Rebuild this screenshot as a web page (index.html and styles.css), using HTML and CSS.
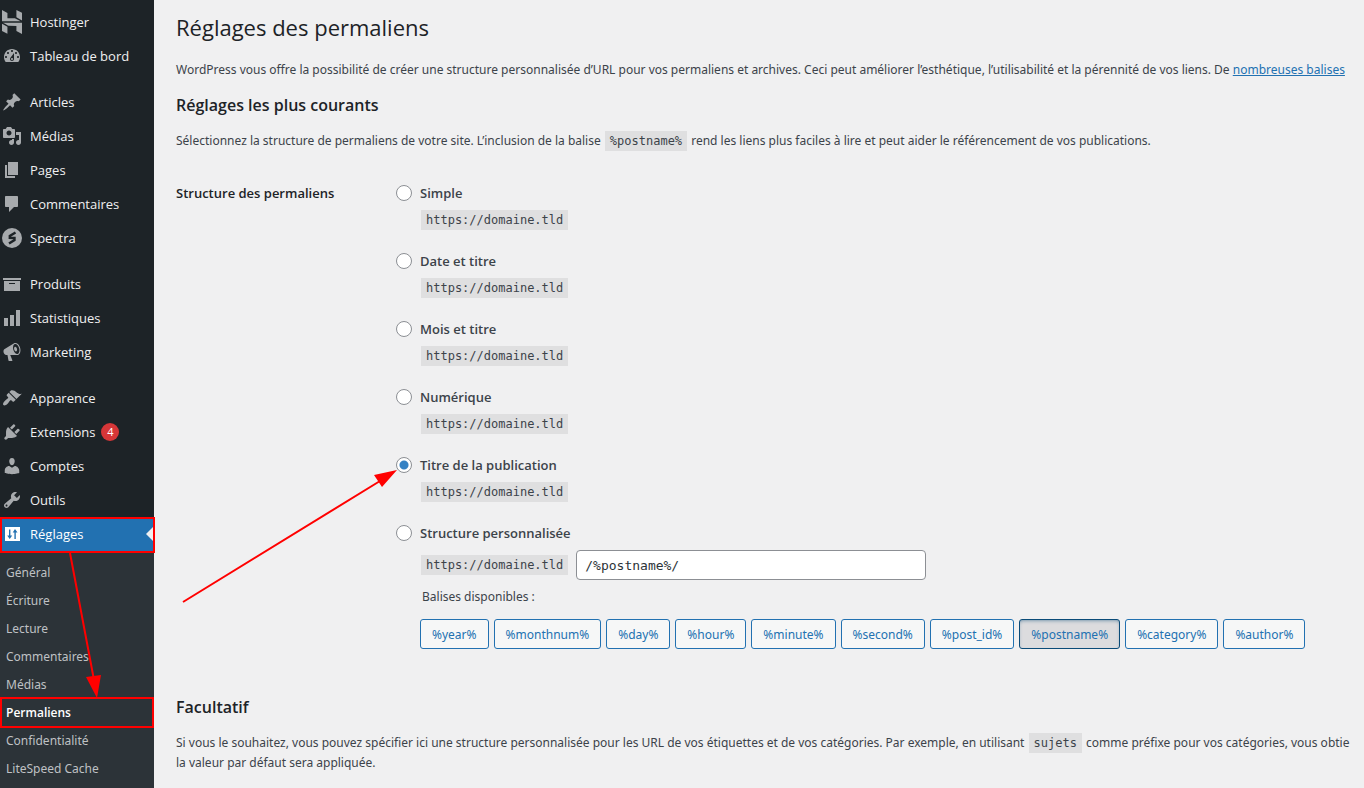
FILE: index.html
```html
<!DOCTYPE html>
<html lang="fr">
<head>
  <meta charset="UTF-8">
  <title>Réglages des permaliens</title>
  <link rel="stylesheet" href="styles.css">
</head>
<body>
  <div class="admin">
    <nav class="sidebar">
      <ul class="menu">
        <li><a href="#"><svg class="icon icon-tall" viewBox="2 0 20 24"><path d="M16.415 0v7.160l5.785 3.384V2.949L16.415 0zM1.800 0v11.237h18.815L14.890 8.156l-7.457-.003V3.025L1.800 0zM16.415 20.894v-5.019l-7.514-.005c.007.033-5.820-3.197-5.820-3.197l19.119.091V24l-5.785-3.106zM1.800 13.551v7.343l5.633 2.949v-6.988l-5.633-3.304z"/></svg>Hostinger</a></li>
        <li><a href="#"><svg class="icon" viewBox="0 0 20 20"><path fill-rule="evenodd" d="M3.760 16h12.480c1.100-1.370 1.760-3.110 1.760-5 0-4.420-3.580-8-8-8s-8 3.580-8 8c0 1.890.66 3.630 1.760 5zM10 4c.55 0 1 .45 1 1s-.45 1-1 1-1-.45-1-1 .45-1 1-1zM6 6c.55 0 1 .45 1 1s-.45 1-1 1-1-.45-1-1 .45-1 1-1zm8 0c.55 0 1 .45 1 1s-.45 1-1 1-1-.45-1-1 .45-1 1-1zm-5.370 5.550L12 7v6c0 1.100-.9 2-2 2s-2-.9-2-2c0-.57.24-1.080.63-1.450zM4 10c.55 0 1 .45 1 1s-.45 1-1 1-1-.45-1-1 .45-1 1-1zm12 0c.55 0 1 .45 1 1s-.45 1-1 1-1-.45-1-1 .45-1 1-1zm-5 3c0-.55-.45-1-1-1s-1 .45-1 1 .45 1 1 1 1-.45 1-1z"/></svg>Tableau de bord</a></li>
      </ul>
      <ul class="menu">
        <li><a href="#"><svg class="icon" viewBox="0 0 20 20"><path d="M10.440 3.020l1.820-1.820 6.360 6.350-1.830 1.820c-1.050-.68-2.480-.57-3.410.36l-.75.75c-.92.93-1.040 2.350-.35 3.410l-1.830 1.820-2.410-2.410-2.800 2.790c-.42.42-3.380 2.710-3.800 2.290s1.860-3.390 2.280-3.810l2.790-2.790L4.100 9.360l1.830-1.820c1.050.69 2.480.57 3.400-.36l.75-.75c.93-.92 1.050-2.350.36-3.410z"/></svg>Articles</a></li>
        <li><a href="#"><svg class="icon" viewBox="0 0 20 20"><path fill-rule="evenodd" d="M13 11V4c0-.55-.45-1-1-1h-1.670L9 1H5L3.670 3H2c-.55 0-1 .45-1 1v7c0 .55.45 1 1 1h10c.55 0 1-.45 1-1zM7 4.500c1.380 0 2.500 1.120 2.500 2.500S8.380 9.500 7 9.500 4.500 8.380 4.500 7 5.620 4.500 7 4.500zM14 6h5v10.500c0 1.380-1.120 2.500-2.500 2.500S14 17.880 14 16.500s1.120-2.500 2.500-2.500c.17 0 .34.02.5.05V9h-3V6zm-4 8.050V13h2v3.500c0 1.380-1.120 2.500-2.500 2.500S7 17.880 7 16.500 8.120 14 9.500 14c.17 0 .34.02.5.05z"/></svg>Médias</a></li>
        <li><a href="#"><svg class="icon" viewBox="0 0 20 20"><path d="M6 15V2h10v13H6zm-1 1h8v2H3V5h2v11z"/></svg>Pages</a></li>
        <li><a href="#"><svg class="icon" viewBox="0 0 20 20"><path d="M4 2h11c.55 0 1 .45 1 1v9c0 .55-.45 1-1 1h-3l-5 5v-5H4c-.55 0-1-.45-1-1V3c0-.55.45-1 1-1z"/></svg>Commentaires</a></li>
        <li><a href="#"><svg class="icon" viewBox="0 0 20 20"><circle cx="10" cy="10" r="10"/><path class="icon-line" d="M13.500 4.500L7.800 8V9.800L12.500 10V12L7 15.500"/></svg>Spectra</a></li>
      </ul>
      <ul class="menu">
        <li><a href="#"><svg class="icon" viewBox="0 0 20 20"><path fill-rule="evenodd" d="M19 4v2H1V4h18zM2 7h16v10H2V7zm11 3V9H7v1h6z"/></svg>Produits</a></li>
        <li><a href="#"><svg class="icon" viewBox="0 0 20 20"><path d="M18 18V2h-4v16h4zm-6 0V7H8v11h4zm-6 0v-8H2v8h4z"/></svg>Statistiques</a></li>
        <li><a href="#"><svg class="icon" viewBox="0 0 20 20"><path fill-rule="evenodd" d="M18.150 5.940c.46 1.620.38 3.220-.02 4.480-.42 1.280-1.260 2.180-2.300 2.480-.16.06-.26.06-.4.06-.06.02-.12.02-.18.02-.06.02-.14.02-.22.02h-6.800l2.220 5.500c.02.14-.06.26-.14.34-.08.1-.24.16-.34.16H6.950c-.1 0-.26-.06-.34-.16-.08-.08-.16-.2-.14-.34l-1-5.500H4.250l-.02-.02c-.5.06-1.080-.18-1.540-.62s-.88-1.080-1.060-1.880c-.24-.8-.2-1.560-.02-2.200.18-.62.58-1.080 1.060-1.300l.02-.02 9-5.400c.1-.06.18-.1.24-.16.06-.04.14-.08.24-.12.16-.08.28-.12.5-.18 1.040-.3 2.240.1 3.220.98s1.840 2.240 2.260 3.860zm-2.580 5.980h-.02c.4-.1.74-.34 1.040-.7.58-.7.86-1.760.86-3.040 0-.64-.1-1.300-.28-1.980-.34-1.360-1.020-2.500-1.780-3.240s-1.680-1.100-2.460-.88c-.82.22-1.400.96-1.700 2-.32 1.040-.28 2.360.06 3.720.38 1.360 1 2.500 1.800 3.240.78.74 1.620 1.100 2.480.88zm-2.540-7.080c.22-.04.42-.02.62.04.38.16.76.48 1.020 1s.42 1.200.42 1.780c0 .3-.04.56-.12.8-.18.48-.44.84-.86.94-.34.1-.8-.06-1.140-.4s-.64-.86-.78-1.500c-.18-.62-.12-1.240.02-1.720s.48-.84.82-.94z"/></svg>Marketing</a></li>
      </ul>
      <ul class="menu">
        <li><a href="#"><svg class="icon" viewBox="0 0 20 20"><path d="M14.480 11.060L7.410 3.990l1.500-1.500c.5-.56 2.300-.47 3.510.32 1.210.8 1.430 1.280 2.910 2.100 1.180.64 2.450 1.260 4.450.85zm-.71.71L6.700 4.700 4.930 6.470c-.39.39-.39 1.020 0 1.410l1.060 1.060c.39.39.39 1.030 0 1.420-.6.6-1.430 1.110-2.210 1.690-.35.26-.7.53-1.010.84C1.430 14.230.4 16.080 1.400 17.070c.99 1 2.840-.03 4.180-1.360.31-.31.58-.66.85-1.020.57-.78 1.080-1.610 1.690-2.210.39-.39 1.020-.39 1.410 0l1.060 1.060c.39.39 1.020.39 1.410 0z"/></svg>Apparence</a></li>
        <li><a href="#"><svg class="icon" viewBox="0 0 20 20"><path d="M13.110 4.360L9.870 7.600 8 5.730l3.240-3.240c.35-.34 1.050-.2 1.560.32.52.51.66 1.210.31 1.550zm-8 1.770l.91-1.120 9.010 9.010-1.190.84c-.71.71-2.630 1.160-3.820 1.160H6.140L4.900 17.260c-.59.59-1.540.59-2.120 0-.59-.58-.59-1.530 0-2.120l1.240-1.240v-3.880c0-1.130.4-3.190 1.090-3.890zm7.260 3.970l3.240-3.240c.34-.35 1.040-.21 1.550.31.52.51.66 1.210.31 1.550l-3.240 3.250z"/></svg>Extensions <span class="badge">4</span></a></li>
        <li><a href="#"><svg class="icon" viewBox="0 0 20 20"><path d="M10 9.250c-2.270 0-2.730-3.440-2.730-3.440C7 4.020 7.820 2 9.970 2c2.160 0 2.980 2.020 2.710 3.810 0 0-.41 3.440-2.680 3.440zm0 2.570L12.720 10c2.390 0 4.520 2.330 4.520 4.530v2.490s-3.650 1.130-7.240 1.130c-3.650 0-7.240-1.130-7.240-1.130v-2.490c0-2.250 1.940-4.480 4.470-4.480z"/></svg>Comptes</a></li>
        <li><a href="#"><svg class="icon" viewBox="0 0 20 20"><path fill-rule="evenodd" d="M16.680 9.770c-1.340 1.340-3.300 1.670-4.950.99l-5.410 6.520c-.99.99-2.590.99-3.580 0s-.99-2.590 0-3.570l6.520-5.420c-.68-1.650-.35-3.610.99-4.950 1.280-1.280 3.120-1.620 4.720-1.060l-2.890 2.890 2.820 2.820 2.860-2.870c.53 1.580.18 3.390-1.080 4.650zM3.810 16.210c.4.39 1.040.39 1.430 0 .4-.4.4-1.040 0-1.430-.39-.4-1.030-.4-1.430 0-.39.39-.39 1.030 0 1.430z"/></svg>Outils</a></li>
        <li><a href="#" class="current"><svg class="icon" viewBox="0 0 20 20"><path fill-rule="evenodd" d="M3 3h15v14H3zM7 5.500v6H5.200L7.700 15l2.500-3.500H8.400v-6zM13 5L10.700 8.500h1.700V15h1.400V8.500h1.700z"/></svg>Réglages</a></li>
      </ul>
      <ul class="submenu">
        <li><a href="#">Général</a></li>
        <li><a href="#">Écriture</a></li>
        <li><a href="#">Lecture</a></li>
        <li><a href="#">Commentaires</a></li>
        <li><a href="#">Médias</a></li>
        <li><a href="#" class="active">Permaliens</a></li>
        <li><a href="#">Confidentialité</a></li>
        <li><a href="#">LiteSpeed Cache</a></li>
      </ul>
    </nav>

    <main class="content">
      <h1>Réglages des permaliens</h1>
      <p>WordPress vous offre la possibilité de créer une structure personnalisée d’URL pour vos permaliens et archives. Ceci peut améliorer l’esthétique, l’utilisabilité et la pérennité de vos liens. De <a href="#">nombreuses balises</a></p>

      <h2>Réglages les plus courants</h2>
      <p>Sélectionnez la structure de permaliens de votre site. L’inclusion de la balise <code>%postname%</code> rend les liens plus faciles à lire et peut aider le référencement de vos publications.</p>

      <form class="structure">
        <div class="structure-title">Structure des permaliens</div>
        <div class="options">
          <div class="option">
            <input type="radio" name="structure" id="simple">
            <label for="simple">Simple</label>
            <div class="example"><code>https://domaine.tld</code></div>
          </div>
          <div class="option">
            <input type="radio" name="structure" id="date">
            <label for="date">Date et titre</label>
            <div class="example"><code>https://domaine.tld</code></div>
          </div>
          <div class="option">
            <input type="radio" name="structure" id="mois">
            <label for="mois">Mois et titre</label>
            <div class="example"><code>https://domaine.tld</code></div>
          </div>
          <div class="option">
            <input type="radio" name="structure" id="numerique">
            <label for="numerique">Numérique</label>
            <div class="example"><code>https://domaine.tld</code></div>
          </div>
          <div class="option">
            <input type="radio" name="structure" id="titre" checked>
            <label for="titre">Titre de la publication</label>
            <div class="example"><code>https://domaine.tld</code></div>
          </div>
          <div class="option">
            <input type="radio" name="structure" id="perso">
            <label for="perso">Structure personnalisée</label>
            <div class="example custom">
              <code>https://domaine.tld</code>
              <input type="text" class="text-input" aria-label="Structure personnalisée" value="/%postname%/">
            </div>
            <div class="example tags-title">Balises disponibles :</div>
            <div class="example tags">
              <button type="button">%year%</button>
              <button type="button">%monthnum%</button>
              <button type="button">%day%</button>
              <button type="button">%hour%</button>
              <button type="button">%minute%</button>
              <button type="button">%second%</button>
              <button type="button">%post_id%</button>
              <button type="button" class="pressed">%postname%</button>
              <button type="button">%category%</button>
              <button type="button">%author%</button>
            </div>
          </div>
        </div>
      </form>

      <h2>Facultatif</h2>
      <p>Si vous le souhaitez, vous pouvez spécifier ici une structure personnalisée pour les URL de vos étiquettes et de vos catégories. Par exemple, en utilisant <code>sujets</code> comme préfixe pour vos catégories, vous obtie<br>la valeur par défaut sera appliquée.</p>
    </main>

    <!-- red marks drawn over the page -->
    <svg class="marks" width="420" height="788" viewBox="0 0 420 788">
      <rect x="1" y="518" width="153" height="34"/>
      <rect x="1" y="698" width="152" height="29"/>
      <path d="M70 553L94 680M183 602L380 481"/>
      <path class="head" d="M97 698L86 677L101 675zM397 470L374 475L382 487z"/>
    </svg>
  </div>
</body>
</html>
```
FILE: styles.css
```css
* {
  box-sizing: border-box;
}
body {
  margin: 0;
  background: #f0f0f1;
  color: #3c434a;
  font-family: "Noto Sans", "Open Sans", sans-serif;
  font-size: 12px;
  line-height: 20px;
}
.admin {
  position: relative;
  display: flex;
  height: 100vh;
  overflow: hidden;
}

/* Sidebar */
.sidebar {
  flex: 0 0 154px;
  padding-top: 5px;
  background: #1d2327;
}
.menu,
.submenu {
  list-style: none;
  margin: 0;
  padding: 0;
}
.menu + .menu {
  margin-top: 12px;
}
.menu a {
  position: relative;
  display: flex;
  align-items: center;
  gap: 8px;
  height: 34px;
  padding-left: 2px;
  color: #f0f0f1;
  font-family: "Open Sans", sans-serif;
  font-size: 13px;
  text-decoration: none;
}
.icon {
  width: 20px;
  height: 20px;
  fill: #a7aaad;
}
.icon-tall {
  height: 24px;
}
.icon-line {
  fill: none;
  stroke: #1d2327;
  stroke-width: 2.4;
}
.badge {
  width: 18px;
  height: 18px;
  margin-left: -2px;
  border-radius: 9px;
  background: #d63638;
  color: #fff;
  font-size: 11px;
  line-height: 18px;
  text-align: center;
}
.menu .current {
  background: #2271b1;
  color: #fff;
}
.current .icon {
  fill: #fff;
}
.current::after {
  content: "";
  position: absolute;
  right: 0;
  top: 9px;
  border: 8px solid transparent;
  border-left-width: 0;
  border-right-color: #f0f0f1;
}
.submenu {
  padding: 8px 0;
  background: #2c3338;
}
.submenu a {
  display: block;
  padding: 4px 6px;
  color: #bfc1c4;
  text-decoration: none;
}
.submenu .active {
  color: #fff;
  font-family: "Open Sans", sans-serif;
  font-weight: 600;
}

/* Content */
.content {
  flex: 1;
  min-width: 0;
  padding: 13px 0 0 22px;
  white-space: nowrap;
}
h1 {
  margin: 0 0 19px;
  color: #1d2327;
  font-family: "Open Sans", sans-serif;
  font-size: 22px;
  font-weight: 400;
  line-height: 28px;
}
h2 {
  margin: 15px 0 16px;
  color: #1d2327;
  font-family: "Open Sans", sans-serif;
  font-size: 16px;
  font-weight: 600;
  line-height: 20px;
}
p {
  margin: 15px 0;
}
.content a {
  color: #2271b1;
}
code {
  display: inline-block;
  margin: 0 1px;
  padding: 0 5px;
  background: #dfdfe0;
  font-family: "DejaVu Sans Mono", monospace;
  font-size: 12px;
  line-height: 20px;
}

.structure {
  display: flex;
  margin: 32px 0 48px;
}
.structure-title {
  flex: 0 0 220px;
  color: #1d2327;
  font-family: "Open Sans", sans-serif;
  font-size: 13px;
  font-weight: 600;
}
.options {
  display: flex;
  flex-direction: column;
  gap: 21px;
}
.option {
  display: grid;
  grid-template-columns: 16px auto;
  column-gap: 8px;
  align-items: center;
}
.option label {
  font-family: "Open Sans", sans-serif;
  font-size: 13px;
  font-weight: 600;
}
.option input[type="radio"] {
  appearance: none;
  width: 16px;
  height: 16px;
  margin: 0;
  border: 1px solid #8c8f94;
  border-radius: 50%;
  background: #fff;
}
.option input[type="radio"]:checked {
  background: radial-gradient(circle, #3582c4 4px, #fff 5px);
}
.example {
  grid-column: 2;
  margin-top: 7px;
}
.custom {
  display: flex;
  align-items: center;
  gap: 7px;
}
.text-input {
  width: 350px;
  height: 30px;
  padding: 0 8px;
  border: 1px solid #8c8f94;
  border-radius: 4px;
  background: #fff;
  color: #2c3338;
  font-family: "DejaVu Sans Mono", monospace;
  font-size: 13px;
}
.tags-title {
  padding-left: 2px;
}
.tags {
  display: flex;
  gap: 5px;
  margin-top: 12px;
}
.tags button {
  height: 30px;
  padding: 0 11px;
  border: 1px solid #2271b1;
  border-radius: 3px;
  background: #f6f7f7;
  color: #2271b1;
  font-family: inherit;
  font-size: 12px;
}
.tags .pressed {
  border-color: #0a4b78;
  background: #dcdcde;
  box-shadow: inset 0 2px 5px -3px #0a4b78;
}

.marks {
  position: absolute;
  top: 0;
  left: 0;
  fill: none;
  stroke: #f00;
  stroke-width: 2;
  pointer-events: none;
}
.marks .head {
  fill: #f00;
  stroke: none;
}
```
